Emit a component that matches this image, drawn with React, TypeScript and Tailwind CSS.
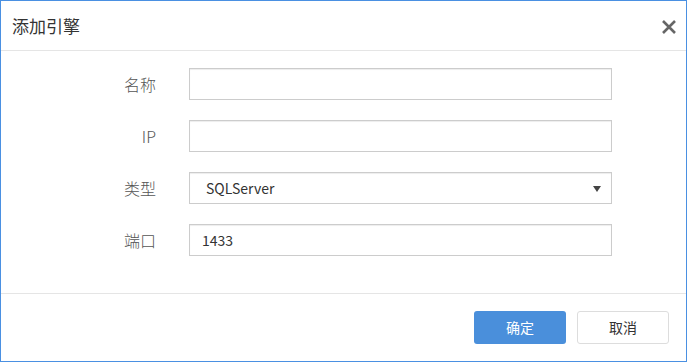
import React from "react";

const font = { fontFamily: '"Microsoft YaHei","Noto Sans CJK SC","Noto Sans",sans-serif' };

function Field({ label, children }: { label: string; children: React.ReactNode }) {
  return (
    <div className="flex items-center h-[32px]">
      <div className="w-[155px] text-right text-[16px] text-[#555] font-light">{label}</div>
      <div className="ml-[33px] w-[423px] h-[32px]">{children}</div>
    </div>
  );
}

const inputCls =
  "w-full h-full border border-[#ccc] bg-white px-[12px] text-[14px] text-[#333] outline-none shadow-[inset_0_1px_1px_rgba(0,0,0,0.075)]";

export default function App() {
  return (
    <div style={font} className="w-[687px] h-[362px] bg-white border border-[#4a90e2] flex flex-col">
      <div className="h-[50px] flex items-center justify-between pl-[11px] pr-[9px] border-b border-[#e5e5e5]">
        <div className="text-[17px] text-[#333]">添加引擎</div>
        <svg width="16" height="16" viewBox="0 0 16 16" className="mt-[2px]">
          <path d="M2 2 L14 14 M14 2 L2 14" stroke="#666" strokeWidth="2.6" strokeLinecap="butt" />
        </svg>
      </div>
      <div className="flex flex-col gap-[20px] pt-[17px] pb-[37px]">
        <Field label="名称">
          <input className={inputCls} />
        </Field>
        <Field label="IP">
          <input className={inputCls} />
        </Field>
        <Field label="类型">
          <div className={inputCls + " relative flex items-center pl-[16px]"}>
            <span>SQLServer</span>
            <svg width="8" height="6" viewBox="0 0 8 6" className="absolute right-[10px] top-[13px]">
              <path d="M0 0 H8 L4 6 Z" fill="#444" />
            </svg>
          </div>
        </Field>
        <Field label="端口">
          <div className={inputCls + " flex items-center"}>
            <span>1433</span>
          </div>
        </Field>
      </div>
      <div className="border-t border-[#e5e5e5] flex-1 flex justify-end items-start pt-[17px] pr-[17px] gap-[11px]">
        <button className="w-[92px] h-[33px] rounded-[3px] bg-[#4a8fdb] text-white text-[14px]">确定</button>
        <button className="w-[92px] h-[33px] rounded-[3px] bg-white border border-[#ddd] text-[#333] text-[14px]">取消</button>
      </div>
    </div>
  );
}
